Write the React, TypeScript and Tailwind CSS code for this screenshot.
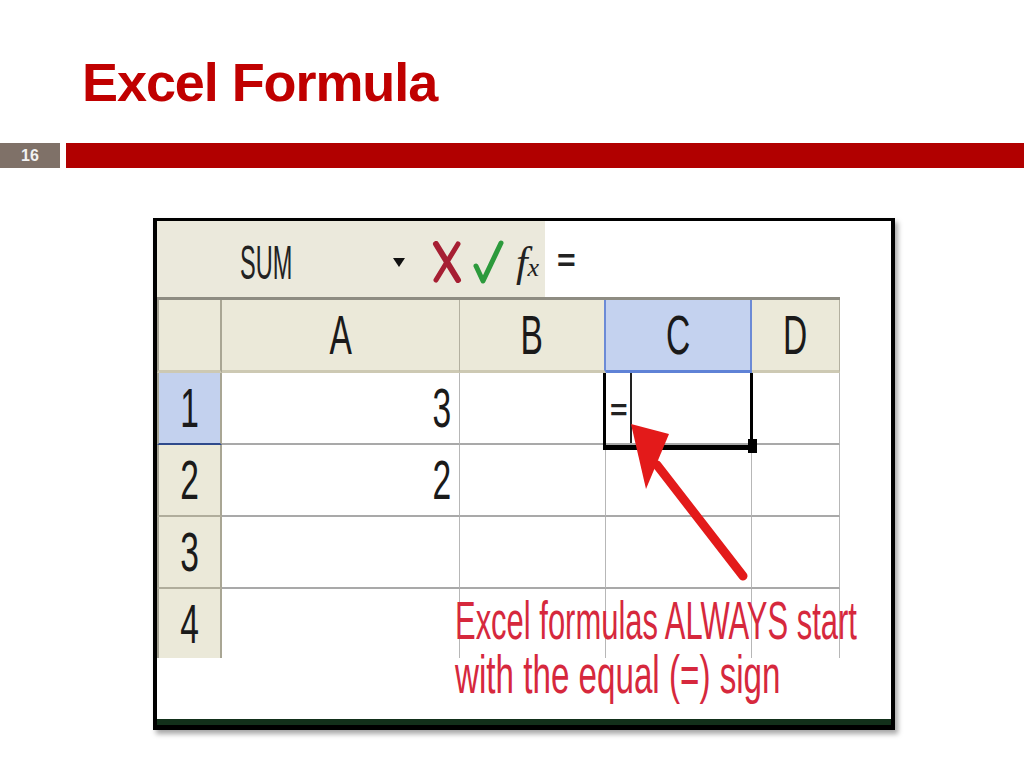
import React from "react";

// column widths of the sheet (row header, A, B, C, D)
const COLS = [
  { key: "A", w: "w-[238px]" },
  { key: "B", w: "w-[146px]" },
  { key: "C", w: "w-[146px]" },
  { key: "D", w: "w-[88px]" },
];

const ROWS = [
  { n: "1", a: "3", h: "h-[72px]" },
  { n: "2", a: "2", h: "h-[72px]" },
  { n: "3", a: "", h: "h-[72px]" },
  { n: "4", a: "", h: "h-[69px]" },
];

const Tall: React.FC<{ children: React.ReactNode; origin?: string }> = ({
  children,
  origin = "origin-center",
}) => (
  <span
    className={`inline-block text-[56px] leading-none text-[#1a1a1a] scale-x-[0.6] ${origin}`}
  >
    {children}
  </span>
);

const FormulaBar = () => (
  <div className="flex h-[76px]">
    <div className="flex w-[388px] items-center bg-[#ebe9dc] pt-[6px]">
      <span className="ml-[83px] inline-block origin-left scale-x-[0.48] text-[49px] leading-none text-[#222]">
        SUM
      </span>
      <svg width="12" height="10" viewBox="0 0 12 10" className="ml-[44px] mt-[2px]">
        <polygon points="0,0 12,0 6,9" fill="#111" />
      </svg>
      {/* cancel */}
      <svg width="30" height="42" viewBox="0 0 30 42" className="ml-[27px]">
        <path d="M4 3 L26 39" stroke="#a61f33" strokeWidth="6" strokeLinecap="round" />
        <path d="M26 3 L4 39" stroke="#a61f33" strokeWidth="5" strokeLinecap="round" />
      </svg>
      {/* enter */}
      <svg width="32" height="44" viewBox="0 0 32 44" className="ml-[10px]">
        <path
          d="M4 26 L11 41 L29 3"
          fill="none"
          stroke="#2c9a3c"
          strokeWidth="5"
          strokeLinecap="round"
          strokeLinejoin="round"
        />
      </svg>
      <span className="ml-[12px] font-['Liberation_Serif',serif] italic leading-none text-[#222]">
        <span className="text-[42px]">f</span>
        <span className="text-[26px]">x</span>
      </span>
    </div>
    <div className="flex flex-1 items-center bg-white pt-[2px]">
      <span className="ml-[12px] text-[32px] font-bold leading-none text-[#222]">=</span>
    </div>
  </div>
);

const HeaderRow = () => (
  <div className="flex h-[73px]">
    <div className="w-[65px] border-b-[3px] border-r-2 border-l-2 border-b-[#cdc9b3] border-r-[#a9a694] border-l-[#a3a192] bg-[#ebe9d9]" />
    {COLS.map((c) => {
      const sel = c.key === "C";
      return (
        <div
          key={c.key}
          className={`${c.w} flex items-center justify-center border-b-[3px] ${
            sel
              ? "border-r-2 border-b-[#5f82d6] border-r-[#6c8bd6] bg-[#c4d2ef]"
              : c.key === "B"
              ? "border-r-2 border-b-[#cdc9b3] border-r-[#6c8bd6] bg-[#ebe9d9]"
              : "border-r border-b-[#cdc9b3] border-r-[#b3b0a0] bg-[#ebe9d9]"
          }`}
        >
          <Tall>{c.key}</Tall>
        </div>
      );
    })}
  </div>
);

const SelectedCell = () => (
  <>
    <div className="absolute -left-[3px] -right-[2px] top-0 -bottom-[7px] z-10 border-l-[3px] border-r-[3px] border-b-[5px] border-black" />
    <div className="absolute left-[24px] top-0 bottom-0 z-10 w-[2px] bg-[#222]" />
    <span className="absolute left-[4px] top-[22px] z-10 text-[30px] font-bold leading-none text-[#222]">
      =
    </span>
    <div className="absolute -right-[6px] -bottom-[10px] z-10 h-[14px] w-[9px] bg-black" />
  </>
);

const SheetRow: React.FC<{ r: (typeof ROWS)[number]; last: boolean }> = ({ r, last }) => {
  const first = r.n === "1";
  const line = last ? "" : "border-b-2 border-b-[#a9a9a9]";
  return (
    <div className={`flex ${r.h}`}>
      <div
        className={`flex w-[65px] items-center justify-center border-l-2 border-r-2 border-l-[#a3a192] border-r-[#a9a694] ${
          first
            ? "border-b-2 border-b-[#2f4a8c] bg-[#c3d1ee]"
            : last
            ? "bg-[#ebe9d9]"
            : "border-b-2 border-b-[#b0ad9c] bg-[#ebe9d9]"
        }`}
      >
        <Tall>{r.n}</Tall>
      </div>
      {COLS.map((c) => (
        <div
          key={c.key}
          className={`${c.w} relative flex items-center justify-end border-r border-r-[#b7b7b7] bg-white pr-[8px] ${line}`}
        >
          {c.key === "A" && r.a && <Tall origin="origin-right">{r.a}</Tall>}
          {c.key === "C" && first && <SelectedCell />}
        </div>
      ))}
    </div>
  );
};

const Arrow = () => (
  <svg
    className="pointer-events-none absolute inset-0 z-20"
    width="734"
    height="504"
    viewBox="0 0 734 504"
  >
    <path d="M586 355 L500 244" stroke="#e31a1a" strokeWidth="9" strokeLinecap="round" />
    <polygon points="474,203 512,213 489,268" fill="#e31a1a" />
  </svg>
);

export default function App() {
  return (
    <div className="h-[768px] w-[1024px] overflow-hidden bg-white font-['Liberation_Sans',Arial,sans-serif]">
      <h1 className="ml-[82px] pt-[55px] text-[54px] font-bold leading-none tracking-[-0.02em] text-[#c00000]">
        Excel Formula
      </h1>

      <div className="mt-[34px] flex h-[25px]">
        <div className="flex w-[60px] items-center justify-center bg-[#7f7168] text-[16px] font-bold text-[#f2f2f2]">
          16
        </div>
        <div className="ml-[6px] flex-1 bg-[#b10000]" />
      </div>

      <div className="ml-[153px] mt-[50px] h-[512px] w-[742px] border-t-[3px] border-l-4 border-r-4 border-b-[5px] border-black shadow-[3px_4px_5px_rgba(0,0,0,0.35)]">
        <div className="relative flex h-full flex-col bg-white">
          <FormulaBar />
          <div className="flex">
            <div className="flex w-[683px] flex-col">
              <div className="h-[3px] bg-[#8e8c82]" />
              <HeaderRow />
              {ROWS.map((r, i) => (
                <SheetRow key={r.n} r={r} last={i === ROWS.length - 1} />
              ))}
            </div>
            <div className="flex-1 bg-white" />
          </div>
          <div className="flex-1" />
          <div className="h-[6px] bg-[#12301a]" />

          <Arrow />

          <div className="absolute left-[298px] top-[373px] z-20 flex flex-col text-[53px] leading-[54px] text-[#d6283d]">
            <span className="inline-block origin-left scale-x-[0.584] whitespace-nowrap">
              Excel formulas ALWAYS start
            </span>
            <span className="inline-block origin-left scale-x-[0.626] whitespace-nowrap">
              with the equal (=) sign
            </span>
          </div>
        </div>
      </div>
    </div>
  );
}
